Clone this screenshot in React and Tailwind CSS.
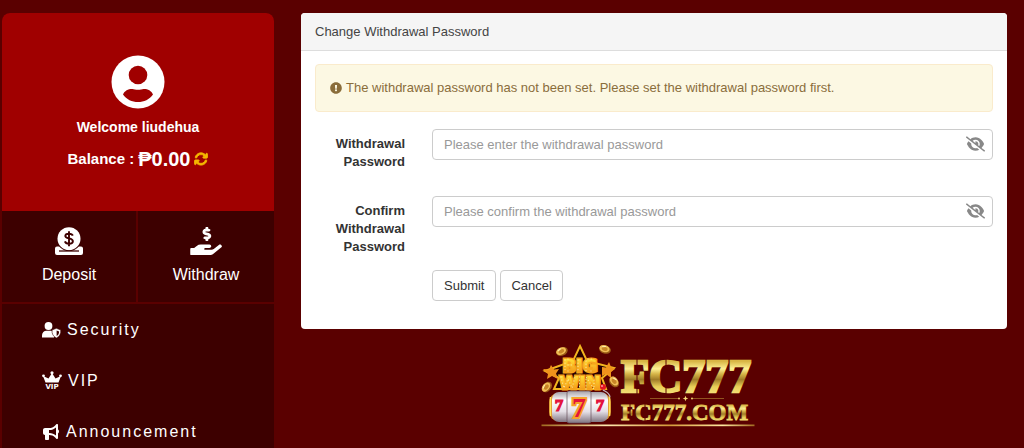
import React, { useState } from "react";
import { FaExclamationCircle, FaHandHoldingUsd } from "react-icons/fa";
import { FaArrowsRotate, FaBullhorn, FaEye, FaEyeSlash } from "react-icons/fa6";

const AvatarIcon = () => (
  <svg viewBox="0 0 54 54" className="size-[54px]" aria-hidden="true">
    <circle cx="27" cy="27" r="26.5" fill="#fff" />
    <circle cx="27" cy="20" r="9.3" fill="#a00000" />
    <path d="M12 39.500C13.500 35.500 18 33.700 21.500 34C24 34.900 30 34.900 32.500 34C36 33.700 40.500 35.500 42 39.500C38.500 44.500 33 47 27 47C21 47 15.500 44.500 12 39.500Z" fill="#a00000" />
  </svg>
);

const DepositIcon = () => (
  <svg viewBox="0 0 28 28" className="size-7" aria-hidden="true">
    <path d="M2 19.500H26a2 2 0 0 1 2 2V26a2 2 0 0 1-2 2H2a2 2 0 0 1-2-2V21.500a2 2 0 0 1 2-2Z" fill="#fff" />
    <circle cx="14" cy="11.700" r="12.400" fill="#3d0000" />
    <circle cx="14" cy="11.700" r="11.500" fill="#fff" />
    <path d="M4 24H24" stroke="#3d0000" strokeWidth="1.300" />
    <path d="M17.800 8.600C17.300 7.200 15.900 6.700 14 6.700C11.800 6.700 10.300 7.600 10.300 9.100C10.300 12.400 17.900 10.400 17.900 14.200C17.900 15.800 16.300 16.700 14 16.700C11.800 16.700 10.400 16 9.900 14.400M14 4.200V19.200" fill="none" stroke="#3d0000" strokeWidth="1.900" />
  </svg>
);

const SecurityIcon = () => (
  <svg viewBox="0 0 19 16" className="h-4 w-[19px]" aria-hidden="true">
    <circle cx="6.500" cy="4" r="3.900" fill="#fff" />
    <path d="M0 15.500V13.500C0 10.500 2 8.800 4.500 8.800H9C10.500 8.800 12 9.500 12.500 11L12 15.500Z" fill="#fff" />
    <path d="M14.400 6.300L18.800 8C19 11.800 17.700 14.500 14.400 16C11.100 14.500 9.800 11.800 10 8Z" fill="#fff" stroke="#3d0000" strokeWidth="0.600" />
    <path d="M14.600 8.500L17.100 9.400C17.100 11.600 16.300 13.100 14.600 14.100Z" fill="#3d0000" />
  </svg>
);

const VipIcon = () => (
  <svg viewBox="0 0 20 19" className="h-[19px] w-5" aria-hidden="true">
    <path d="M3.500 11.500L1 5L6.500 7.500L10 2L13.500 7.500L19 5L16.500 11.500Z" fill="#fff" />
    <circle cx="10" cy="1.800" r="1.600" fill="#fff" />
    <circle cx="1.500" cy="4.800" r="1.400" fill="#fff" />
    <circle cx="18.500" cy="4.800" r="1.400" fill="#fff" />
    <text x="10" y="18.300" textAnchor="middle" fontFamily="DejaVu Sans, sans-serif" fontSize="7" fontWeight="700" className="tracking-normal" fill="#fff">VIP</text>
  </svg>
);

const Coin = ({ x, y, angle }) => (
  <g transform={`translate(${x} ${y}) rotate(${angle})`}>
    <ellipse rx="6" ry="4.200" fill="#9a5a16" />
    <ellipse cx="-0.700" cy="-0.700" rx="5.200" ry="3.500" fill="#f0bd55" />
    <ellipse cx="-0.500" cy="-0.500" rx="3" ry="1.900" fill="#c88527" />
    <path d="M-3.500 -2L0 -3.200" stroke="#fff3b8" strokeWidth="1" />
  </g>
);

const serif = "Liberation Serif, serif";

const Logo = () => (
  <svg viewBox="0 0 216 88" className="h-[88px] w-[216px]" role="img" aria-label="FC777">
    <defs>
      <linearGradient id="gold" x1="0" y1="0" x2="0" y2="1">
        <stop offset="0.200" stopColor="#d8b544" />
        <stop offset="0.350" stopColor="#fdf094" />
        <stop offset="0.450" stopColor="#d6b548" />
        <stop offset="0.560" stopColor="#a07c28" />
        <stop offset="0.700" stopColor="#e8cf58" />
        <stop offset="0.850" stopColor="#f6e27c" />
      </linearGradient>
      <linearGradient id="goldLine">
        <stop offset="0" stopColor="#a06a20" />
        <stop offset="0.300" stopColor="#ffe9b0" />
        <stop offset="0.600" stopColor="#d49a3a" />
        <stop offset="0.850" stopColor="#ffe9a0" />
        <stop offset="1" stopColor="#a06a20" />
      </linearGradient>
      <linearGradient id="sign" x1="0" y1="0" x2="0" y2="1">
        <stop offset="0.200" stopColor="#ffdc35" />
        <stop offset="1" stopColor="#f08a12" />
      </linearGradient>
      <linearGradient id="drum" x1="0" y1="0" x2="0" y2="1">
        <stop offset="0" stopColor="#a6a0a8" />
        <stop offset="0.280" stopColor="#ffffff" />
        <stop offset="0.650" stopColor="#e4dfe6" />
        <stop offset="1" stopColor="#817580" />
      </linearGradient>
    </defs>

    <Coin x={22} y={10.5} angle={-25} />
    <Coin x={65} y={8.5} angle={15} />
    <Coin x={74} y={41} angle={50} />
    <Coin x={7} y={46} angle={-50} />

    {/* star behind the sign */}
    <path d="M40 5L47 20L74 27L62 37L66 48H14L19 37L5 30L33 20Z" fill="#260000" stroke="#f3b51e" strokeWidth="2" />
    <path d="M3 28L9 28.500L11 24L14 28.500L19 28L16 32.500L18 38L12 35L7 38L8 33Z" fill="#f0931c" />
    <path d="M62 26L66 26.500L69 21L71 26L75 28L71 31L71 37L66 33L62 35Z" fill="#f0931c" />

    <g fontFamily="DejaVu Sans, sans-serif" fontWeight="700" fontSize="18" textAnchor="middle" stroke="#f7a51c" strokeWidth="3" paintOrder="stroke" fill="url(#sign)">
      <text x="40" y="31">BIG</text>
      <text x="40" y="48">WIN</text>
    </g>
    <g fill="none" stroke="#fffbd0" strokeWidth="1" strokeLinecap="round" strokeDasharray="0 3.200">
      <path d="M25 19V31M38 19V31M46 20V30M51 30H54M28 18H31M28 24H32M28 30H31M48 18H54" />
      <path d="M21 36L24 47L28 38L32 47L35 36M39.500 36V48M46 48V36L54 48V36" />
    </g>

    {/* slot machine reels */}
    <rect x="9" y="52" width="62" height="28" rx="9" fill="#d58c2b" />
    <rect x="12" y="51" width="56" height="30" rx="7" fill="url(#drum)" />
    <rect x="27" y="50" width="24" height="32" rx="2" fill="url(#drum)" stroke="#694e5a" strokeWidth="0.700" />
    <path d="M10.500 56V75M69.500 56V75" stroke="#ffe45e" strokeWidth="1.500" />
    <circle cx="63" cy="46" r="3" fill="#e11422" />
    <circle cx="62" cy="45" r="0.900" fill="#ffaaaa" />
    <path d="M63 49C66 51 69 51 70 56" fill="none" stroke="#c9b8bf" strokeWidth="1.300" />
    <g fontFamily={serif} fontWeight="700" textAnchor="middle" fill="#e3133c">
      <text x="19" y="70" fontSize="17" stroke="#e3133c" strokeWidth="1.200">7</text>
      <text x="39" y="76" fontSize="28" stroke="#f6a32b" strokeWidth="4" paintOrder="stroke">7</text>
      <text x="60" y="70" fontSize="17" stroke="#e3133c" strokeWidth="1.200">7</text>
    </g>

    <g fontFamily={serif} fontWeight="700" fill="url(#gold)" stroke="url(#gold)">
      <text x="81" y="51" fontSize="46" strokeWidth="2.400">FC777</text>
      <text x="81" y="79" fontSize="23" strokeWidth="0.800">FC777.COM</text>
    </g>
    {/* stencil cuts */}
    <path d="M97 18V54M126 17V26M126 46V54M90 62V81M105 62V67M105 76V81" stroke="#5a0000" strokeWidth="1" />
    <path d="M110 57.500H140M151 57.500H184" stroke="#a9792e" strokeWidth="0.700" />
    <path d="M145.500 54.800L146.300 56.700L148.300 57.500L146.300 58.300L145.500 60.200L144.700 58.300L142.700 57.500L144.700 56.700Z" fill="#f5d574" />
    <circle cx="139" cy="57.500" r="0.900" fill="#f5d574" />
    <circle cx="152" cy="57.500" r="0.900" fill="#f5d574" />
    <rect x="1.500" y="83.500" width="213" height="1.700" fill="url(#goldLine)" />
  </svg>
);

const menu = [
  { name: "Security", icon: <SecurityIcon /> },
  { name: "VIP", icon: <VipIcon /> },
  { name: "Announcement", icon: <FaBullhorn className="h-4 w-[18px]" /> },
];

const Sidebar = () => (
  <aside className="w-[272px] shrink-0 bg-[#3d0000] text-white rounded-t-lg">
    <div className="flex flex-col items-center h-[198px] pt-[42px] rounded-t-lg bg-[#a00000] font-bold">
      <AvatarIcon />
      <p className="mt-2 text-sm leading-5">Welcome liudehua</p>
      <div className="mt-2 flex items-center text-[15px] leading-7">
        <span>Balance :</span>
        <span className="ml-1 text-xl leading-7">₱0.00</span>
        <button type="button" aria-label="Refresh balance" className="ml-1 text-[#f5b800]">
          <FaArrowsRotate className="size-[14px]" strokeWidth={30} />
        </button>
      </div>
    </div>
    <div className="grid grid-cols-2 h-[93px] border-b-2 border-[#5a0000] text-base leading-6">
      <a href="#deposit" className="flex flex-col items-center pt-4 border-r-2 border-[#5a0000]">
        <DepositIcon />
        <span className="mt-2">Deposit</span>
      </a>
      <a href="#withdraw" className="flex flex-col items-center pt-4">
        <FaHandHoldingUsd className="h-7 w-8" />
        <span className="mt-2">Withdraw</span>
      </a>
    </div>
    <nav>
      {menu.map((item) => (
        <a key={item.name} href={`#${item.name.toLowerCase()}`} className="flex items-center gap-1.5 h-[51px] pl-10 text-base tracking-[2px]">
          {item.icon}
          {item.name}
        </a>
      ))}
    </nav>
  </aside>
);

const PasswordField = ({ id, label, placeholder, value, onChange }) => {
  const [visible, setVisible] = useState(false);
  return (
    <div className="flex gap-[27px] min-h-[53px] mb-3.5">
      <label htmlFor={id} className="w-[90px] shrink-0 pt-1.5 text-right font-bold">{label}</label>
      <div className="relative flex-1 h-[31px]">
        <input
          id={id} type={visible ? "text" : "password"} placeholder={placeholder} value={value} onChange={onChange}
          className="w-full h-[31px] pl-[11px] pr-9 bg-white border border-[#ccc] rounded placeholder:text-[#999]"
        />
        <button type="button" aria-label="Show password" onClick={() => setVisible(!visible)} className="absolute right-2 top-1.5 text-[#888]">
          {visible ? <FaEye className="h-[18px] w-[19px]" /> : <FaEyeSlash className="h-[18px] w-[19px]" />}
        </button>
      </div>
    </div>
  );
};

const App = () => {
  const [form, setForm] = useState({ password: "", confirm: "" });

  return (
    <div className="flex h-screen overflow-hidden gap-[27px] pt-[13px] pl-0.5 pr-[17px] bg-[#5a0000] font-['Liberation_Sans',Arial,sans-serif]">
      <Sidebar />
      <main className="flex-1 min-w-0">
        <section className="bg-white rounded text-[13px] leading-[18px] text-[#333]">
          <h1 className="px-3.5 pt-2.5 pb-[9px] bg-[#f5f5f5] border-b border-[#ddd] rounded-t text-[#444]">Change Withdrawal Password</h1>
          <div className="px-3.5 pt-[13px] pb-7">
            <div className="flex items-center gap-1 h-12 px-3.5 mb-[17px] rounded border border-[#faebcc] bg-[#fcf8e3] text-[#8a6d3b]">
              <FaExclamationCircle className="size-3" />
              The withdrawal password has not been set. Please set the withdrawal password first.
            </div>
            <form onSubmit={(e) => e.preventDefault()}>
              <PasswordField
                id="password" label="Withdrawal Password" placeholder="Please enter the withdrawal password"
                value={form.password} onChange={(e) => setForm({ ...form, password: e.target.value })}
              />
              <PasswordField
                id="confirm" label="Confirm Withdrawal Password" placeholder="Please confirm the withdrawal password"
                value={form.confirm} onChange={(e) => setForm({ ...form, confirm: e.target.value })}
              />
              <div className="flex gap-1 pl-[117px]">
                <button type="submit" className="h-[31px] px-[11px] border border-[#ccc] rounded">Submit</button>
                <button type="button" className="h-[31px] px-2.5 border border-[#ccc] rounded" onClick={() => setForm({ password: "", confirm: "" })}>Cancel</button>
              </div>
            </form>
          </div>
        </section>
        <div className="flex justify-center pt-3 pr-3">
          <Logo />
        </div>
      </main>
    </div>
  );
};
export default App;
